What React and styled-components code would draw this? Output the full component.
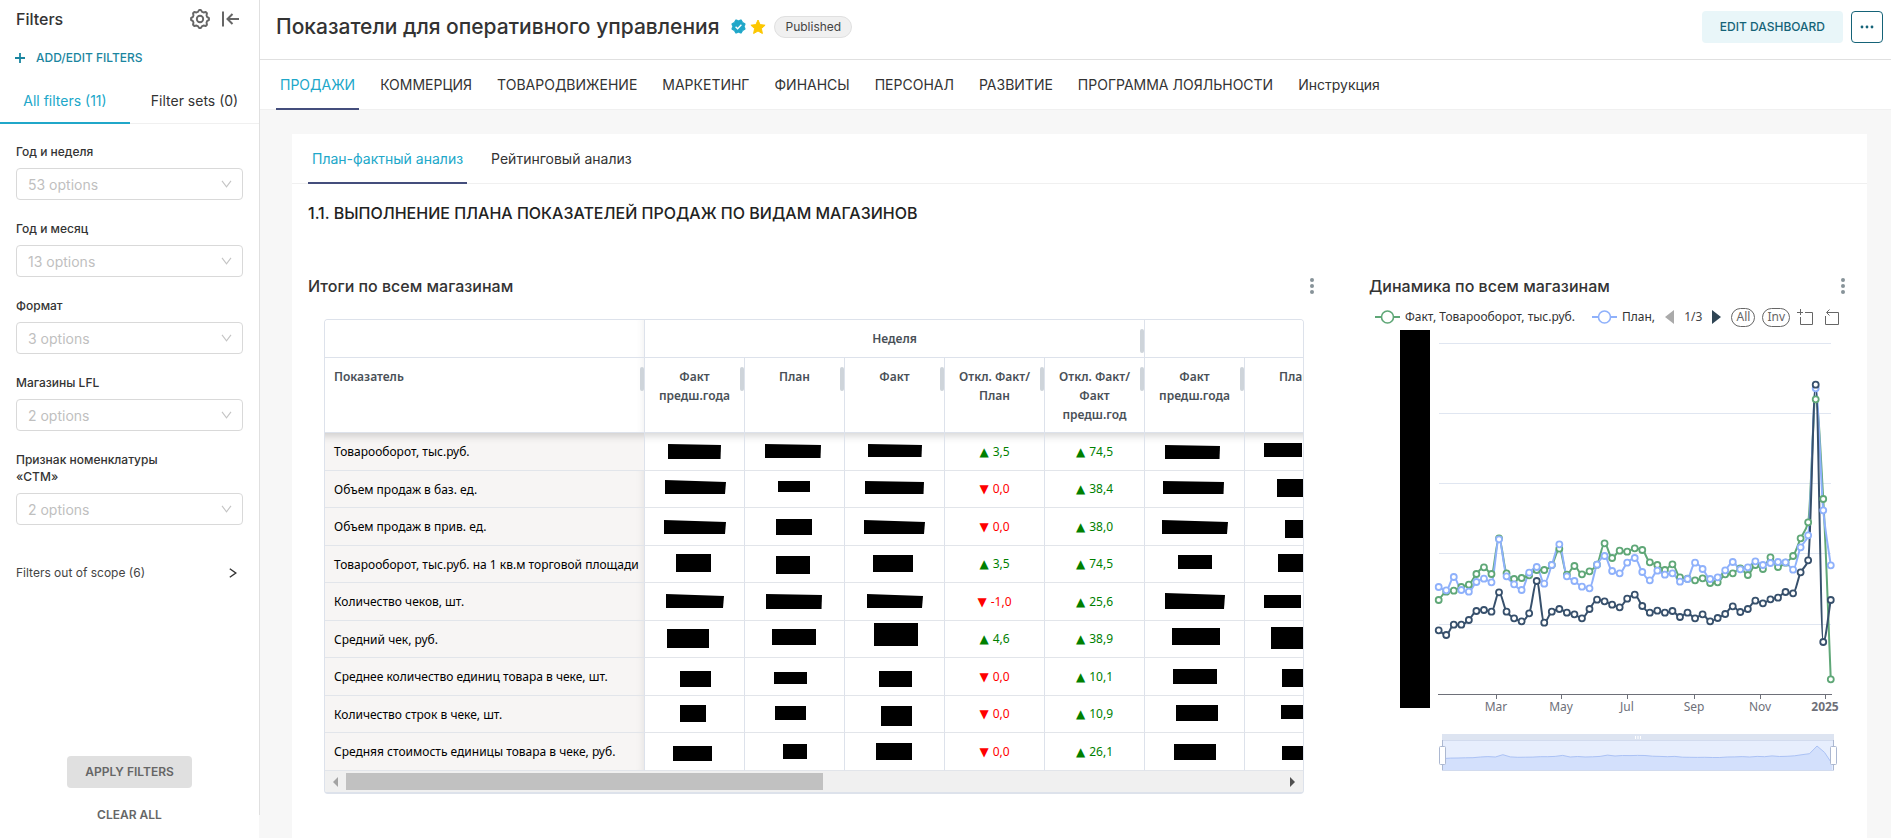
import React from "react";
import styled, { createGlobalStyle } from "styled-components";

const GlobalStyle = createGlobalStyle`
  * { box-sizing: border-box; }
  body {
    margin: 0;
    background: #f7f7f7;
    color: #333;
    font-family: Inter, "Liberation Sans", sans-serif;
    font-size: 14px;
    line-height: 20px;
  }
  button, select { font: inherit; color: inherit; }
  h1, h2, h3 { margin: 0; }
`;

const Page = styled.div`
  display: grid;
  grid-template-columns: 259px minmax(0, 1fr);
  min-height: 100vh;
`;

/* ---------- Sidebar ---------- */

const Sidebar = styled.aside`
  position: relative;
  display: flex;
  flex-direction: column;
  background: #fff;
  &::after {
    content: "";
    position: absolute;
    z-index: 1;
    top: 0;
    right: -1px;
    bottom: 23px;
    width: 1px;
    background: #e0e0e0;
  }
`;

const SidebarHeader = styled.div`
  display: flex;
  align-items: center;
  gap: 12px;
  padding: 8px 19px 0 16px;
`;

const SidebarTitle = styled.h2`
  flex: 1;
  font-size: 16px;
  line-height: 22px;
  font-weight: 500;
`;

const IconButton = styled.button`
  display: flex;
  padding: 0;
  border: 0;
  background: none;
  color: ${(p) => p.$color || "#666"};
  cursor: pointer;
`;

const AddFilters = styled.button`
  display: flex;
  align-items: center;
  align-self: flex-start;
  gap: 11px;
  margin: 18px 0 0 15px;
  padding: 0;
  border: 0;
  background: none;
  color: #1a85a0;
  font-size: 12px;
  font-weight: 500;
  cursor: pointer;
`;

const FilterTabs = styled.div`
  display: grid;
  grid-template-columns: 130px 129px;
  margin-top: 12px;
  border-bottom: 1px solid #f0f0f0;
`;

const FilterTab = styled.button`
  height: 44px;
  margin-bottom: -1px;
  padding: 0;
  border: 0;
  border-bottom: 2px solid ${(p) => (p.$active ? "#20a7c9" : "transparent")};
  background: none;
  color: ${(p) => (p.$active ? "#20a7c9" : "#333")};
  cursor: pointer;
`;

const FilterList = styled.div`
  display: flex;
  flex-direction: column;
  gap: 20px;
  padding: 19px 16px 0;
`;

const FilterField = styled.label`
  display: flex;
  flex-direction: column;
  gap: 8px;
  font-size: 12px;
  line-height: 17px;
  font-weight: 500;
  & > span { max-width: 170px; }
`;

const SelectBox = styled.div`
  display: grid;
  align-items: center;
  & > * { grid-area: 1 / 1; }
  & > svg { justify-self: end; margin-right: 11px; pointer-events: none; }
`;

const Select = styled.select`
  appearance: none;
  width: 100%;
  height: 32px;
  padding: 0 11px;
  border: 1px solid #d9d9d9;
  border-radius: 4px;
  background: #fff;
  color: #bfbfbf;
  font-size: 14px;
  font-weight: 400;
`;

const OutOfScope = styled.button`
  display: flex;
  align-items: center;
  justify-content: space-between;
  margin-top: 38px;
  padding: 0 22px 0 16px;
  border: 0;
  background: none;
  color: #444;
  font-size: 12px;
  cursor: pointer;
`;

const SidebarActions = styled.div`
  display: flex;
  flex-direction: column;
  align-items: center;
  gap: 11px;
  margin-top: auto;
  padding-bottom: 7px;
`;

const ActionButton = styled.button`
  height: 32px;
  padding: 0 18px;
  border: 0;
  border-radius: 4px;
  background: ${(p) => (p.$filled ? "#e0e0e0" : "none")};
  color: #666;
  font-size: 12px;
  font-weight: 600;
  cursor: pointer;
`;

/* ---------- Header ---------- */

const Main = styled.main`
  display: flex;
  flex-direction: column;
  min-width: 0;
`;

const Header = styled.header`
  display: flex;
  align-items: center;
  gap: 8px;
  height: 60px;
  padding: 0 8px 6px 17px;
  border-bottom: 1px solid #e0e0e0;
  background: #fff;
`;

const Title = styled.h1`
  font-size: 21px;
  line-height: 28px;
  font-weight: 500;
`;

const TitleIcons = styled.span`
  display: flex;
  align-items: center;
  gap: 4px;
  padding-left: 4px;
`;

const Published = styled.span`
  height: 22px;
  padding: 0 10px;
  border: 1px solid #e0e0e0;
  border-radius: 11px;
  background: #f0f0f0;
  font-size: 12px;
  line-height: 20px;
  color: #444;
`;

const EditButton = styled.button`
  height: 32px;
  margin-left: auto;
  padding: 0 18px;
  border: 0;
  border-radius: 4px;
  background: #e9f6f9;
  color: #156378;
  font-size: 12px;
  font-weight: 500;
  cursor: pointer;
`;

const MoreButton = styled.button`
  display: grid;
  place-items: center;
  width: 32px;
  height: 32px;
  padding: 0;
  border: 1px solid #156378;
  border-radius: 4px;
  background: #fff;
  color: #156378;
  cursor: pointer;
`;

const TabBar = styled.nav`
  display: flex;
  gap: ${(p) => p.$gap}px;
  height: 50px;
  padding-left: ${(p) => p.$indent}px;
  border-bottom: 1px solid #f0f0f0;
  background: #fff;
`;

const Tab = styled.button`
  height: 50px;
  padding: 0 4px;
  border: 0;
  border-top: 2px solid transparent;
  border-bottom: 2px solid ${(p) => (p.$active ? "#444e7c" : "transparent")};
  background: none;
  color: ${(p) => (p.$active ? "#20a7c9" : "#333")};
  white-space: nowrap;
  cursor: pointer;
`;

/* ---------- Dashboard body ---------- */

const Card = styled.section`
  flex: 1;
  margin: 24px 24px 0 33px;
  background: #fff;
`;

const SectionTitle = styled.h2`
  padding: 17px 16px 0;
  font-size: 16px;
  line-height: 24px;
  font-weight: 500;
  color: #222;
`;

const Charts = styled.div`
  display: grid;
  grid-template-columns: minmax(0, 1fr) 482px;
  gap: 49px;
  padding: 49px 16px 40px;
`;

const ChartHeader = styled.div`
  display: flex;
  align-items: center;
  justify-content: space-between;
  padding-right: 6px;
`;

const ChartTitle = styled.h3`
  font-size: 16px;
  line-height: 24px;
  font-weight: 500;
`;

const TableFrame = styled.div`
  margin: 21px 16px 0;
  border: 1px solid #dde2eb;
  border-bottom-width: 2px;
  border-radius: 4px;
  overflow: hidden;
`;

const Table = styled.table`
  width: 1020px;
  table-layout: fixed;
  border-collapse: separate;
  border-spacing: 0;
  font-family: "Noto Sans", "Open Sans", sans-serif;
  font-size: 12px;
  line-height: 19px;
  color: #000;
`;

const HeadCell = styled.th`
  position: relative;
  height: ${(p) => (p.$group ? 38 : 75)}px;
  padding: 9px 9px 0;
  border-right: 1px solid #dde2eb;
  border-bottom: 1px solid #dde2eb;
  background: #fff;
  color: #495057;
  font-weight: 600;
  text-align: ${(p) => (p.$frozen ? "left" : "center")};
  vertical-align: top;
  ${(p) => p.$frozen && "box-shadow: inset -8px 0 8px -8px rgba(0,0,0,.08);"}
`;

const ResizeHandle = styled.span`
  position: absolute;
  top: 9px;
  right: 0;
  width: 4px;
  height: 24px;
  border-radius: 2px;
  background: #ced4da;
`;

const Row = styled.tr`
  height: 37px;
  &:nth-child(odd) { height: 38px; }
  &:first-child > * { box-shadow: inset 0 12px 10px -10px rgba(0, 0, 0, 0.2); }
`;

const RowName = styled.th`
  padding: 0 0 0 9px;
  border-right: 1px solid #dde2eb;
  border-bottom: 1px solid #e2e5ea;
  background: #f7f5f4;
  font-weight: 400;
  text-align: left;
  white-space: nowrap;
  box-shadow: inset -8px 0 8px -8px rgba(0, 0, 0, 0.1);
`;

const Cell = styled.td`
  padding: 0;
  border-right: 1px solid #dde2eb;
  border-bottom: 1px solid #e2e5ea;
  color: ${(p) => p.$color || "#000"};
  text-align: center;
  & > svg { display: block; overflow: visible; }
`;

const DeltaMark = styled.span`
  margin-right: 4px;
  font-family: "DejaVu Sans", sans-serif;
`;

const ScrollTrack = styled.div`
  display: flex;
  align-items: center;
  justify-content: space-between;
  height: 21px;
  padding: 0 8px;
  background: #f0f0f0;
`;

const ScrollThumb = styled.div`
  width: calc(50% - 4px);
  height: 17px;
  margin: 0 auto 0 8px;
  background: #c1c1c1;
`;

const Legend = styled.div`
  display: flex;
  align-items: center;
  height: 20px;
  margin-top: 9px;
  padding-left: 6px;
  font-family: "Noto Sans", "Open Sans", sans-serif;
  font-size: 12px;
  color: #333;
  white-space: nowrap;
`;

const LegendItem = styled.span`
  display: flex;
  align-items: center;
  gap: 5px;
  margin-right: ${(p) => p.$gap}px;
`;

const Pager = styled.span`
  display: flex;
  align-items: center;
  gap: 10px;
  margin-left: auto;
  color: #444;
`;

const LegendTools = styled.span`
  display: flex;
  align-items: center;
  gap: 7px;
  margin: 0 12px 0 10px;
`;

const PillButton = styled.button`
  min-width: 24px;
  height: 19px;
  padding: 0 4px;
  border: 1px solid #666;
  border-radius: 10px;
  background: #fff;
  color: #666;
  font-size: 12px;
  line-height: 16px;
  cursor: pointer;
`;

const ChartSvg = styled.svg`
  display: block;
  width: 100%;
  height: auto;
  margin-top: 1px;
  font-family: "Noto Sans", "Open Sans", sans-serif;
  font-size: 12px;
`;

/* ---------- Data ---------- */

const FILTERS = [
  ["Год и неделя", "53 options"],
  ["Год и месяц", "13 options"],
  ["Формат", "3 options"],
  ["Магазины LFL", "2 options"],
  ["Признак номенклатуры «СТМ»", "2 options"],
];

const TABS = [
  "ПРОДАЖИ", "КОММЕРЦИЯ", "ТОВАРОДВИЖЕНИЕ", "МАРКЕТИНГ", "ФИНАНСЫ",
  "ПЕРСОНАЛ", "РАЗВИТИЕ", "ПРОГРАММА ЛОЯЛЬНОСТИ", "Инструкция",
];

const COLUMNS = [
  "Факт предш.года", "План", "Факт", "Откл. Факт/План",
  "Откл. Факт/Факт предш.год", "Факт предш.года", "План",
];

// Each mask covers a hidden figure: x, y, width, height, slope of the top edge.
const ROWS = [
  { name: "Товарооборот, тыс.руб.", plan: "3,5", year: "74,5",
    masks: [[23, 10, 53, 15, 1], [20, 10, 56, 14, 1], [23, 10, 54, 13, 1], [20, 11, 55, 14, 1], [19, 9, 38, 14, 0]] },
  { name: "Объем продаж в баз. ед.", plan: "0,0", year: "38,4",
    masks: [[20, 9, 61, 14, 2], [33, 10, 32, 11, 0], [20, 10, 59, 13, 1], [18, 10, 61, 13, 1], [32, 8, 27, 18, 0]] },
  { name: "Объем продаж в прив. ед.", plan: "0,0", year: "38,0",
    masks: [[19, 11, 62, 14, 2], [31, 10, 36, 16, 0], [19, 11, 61, 14, 2], [17, 11, 66, 14, 2], [40, 11, 20, 18, 0]] },
  { name: "Товарооборот, тыс.руб. на 1 кв.м торговой площади", plan: "3,5", year: "74,5",
    masks: [[31, 8, 35, 18, 0], [31, 10, 34, 18, 0], [28, 9, 40, 17, 0], [33, 9, 34, 14, 0], [33, 8, 27, 18, 0]] },
  { name: "Количество чеков, шт.", plan: "-1,0", year: "25,6",
    masks: [[21, 10, 58, 14, 2], [21, 10, 56, 15, 1], [22, 10, 56, 14, 2], [20, 9, 60, 16, 2], [19, 11, 37, 13, 0]] },
  { name: "Средний чек, руб.", plan: "4,6", year: "38,9",
    masks: [[22, 8, 42, 19, 0], [27, 8, 44, 16, 0], [29, 2, 44, 23, 0], [27, 7, 48, 17, 0], [26, 6, 33, 22, 0]] },
  { name: "Среднее количество единиц товара в чеке, шт.", plan: "0,0", year: "10,1",
    masks: [[35, 12, 31, 16, 0], [29, 13, 33, 12, 0], [34, 12, 33, 16, 0], [28, 10, 44, 15, 0], [37, 10, 23, 18, 0]] },
  { name: "Количество строк в чеке, шт.", plan: "0,0", year: "10,9",
    masks: [[35, 9, 26, 17, 0], [30, 10, 31, 14, 0], [36, 10, 31, 20, 0], [31, 9, 42, 16, 0], [36, 9, 23, 14, 0]] },
  { name: "Средняя стоимость единицы товара в чеке, руб.", plan: "0,0", year: "26,1",
    masks: [[28, 12, 39, 15, 0], [38, 10, 24, 15, 0], [31, 9, 36, 17, 0], [29, 10, 42, 16, 0], [37, 12, 22, 14, 0]] },
];

const GREEN = "#5fa777";
const BLUE = "#8fb1fb";
const NAVY = "#37506c";

// Weekly depth below the chart's top edge, in thirds of a unit.
const SERIES = [
  { color: GREEN, data: [720,695,692,681,674,642,622,642,535,640,657,654,646,630,630,615,566,644,618,643,634,614,550,594,572,575,565,570,607,615,630,613,652,656,661,655,669,667,643,640,625,645,615,627,592,621,608,588,535,487,118,417,958] },
  { color: BLUE, data: [681,691,651,690,695,666,656,667,538,649,673,690,638,621,671,615,553,649,663,680,685,614,588,633,640,608,594,636,661,632,644,640,665,657,608,627,657,652,631,606,628,622,604,615,609,606,607,629,562,526,85,451,616] },
  { color: NAVY, data: [811,825,794,794,780,753,750,755,697,755,775,784,760,663,788,755,747,758,763,775,747,719,724,734,742,716,704,738,758,752,758,753,771,758,775,763,784,774,762,739,756,747,722,730,718,713,696,700,637,601,74,846,720] },
];

const toPoints = (data) => data.map((d, i) => [69.7 + i * 7.54, 32 + d / 3]);

// Monotone cubic through the points, so that peaks do not overshoot.
function smoothPath(pts) {
  const step = pts[1][0] - pts[0][0];
  const slope = pts.slice(1).map((p, i) => (p[1] - pts[i][1]) / step);
  const tangent = pts.map((_, i) => {
    if (i === 0) return slope[0];
    if (i === pts.length - 1) return slope[i - 1];
    const a = slope[i - 1];
    const b = slope[i];
    return a * b <= 0 ? 0 : (2 * a * b) / (a + b);
  });
  return pts.reduce((path, [x, y], i) => {
    if (i === 0) return `M${x},${y}`;
    const [px, py] = pts[i - 1];
    const h = step / 3;
    return `${path}C${px + h},${py + h * tangent[i - 1]} ${x - h},${y - h * tangent[i]} ${x},${y}`;
  }, "");
}

/* ---------- Icons ---------- */

const GearIcon = () => {
  const teeth = 8;
  const pts = [];
  for (let i = 0; i < teeth * 4; i += 1) {
    const angle = ((i + 0.5) / (teeth * 4)) * Math.PI * 2 - Math.PI / 16;
    const r = i % 4 < 2 ? 9 : 7.4;
    pts.push(`${(10 + r * Math.cos(angle)).toFixed(2)},${(10 + r * Math.sin(angle)).toFixed(2)}`);
  }
  return (
    <svg width="20" height="20" viewBox="0 0 20 20" fill="none" stroke="currentColor" strokeWidth="1.9" strokeLinejoin="round">
      <polygon points={pts.join(" ")} />
      <circle cx="10" cy="10" r="3.2" />
    </svg>
  );
};

const CollapseIcon = () => (
  <svg width="18" height="20" viewBox="0 0 18 20" fill="none" stroke="currentColor" strokeWidth="2">
    <path d="M1 2.5v15M17 10H6M10.5 5L5.500 10l5 5" />
  </svg>
);

const PlusIcon = () => (
  <svg width="10" height="10" viewBox="0 0 10 10" stroke="currentColor" strokeWidth="1.8">
    <path d="M5 0v10M0 5h10" />
  </svg>
);

const ChevronDown = () => (
  <svg width="11" height="8" viewBox="0 0 11 8" fill="none" stroke="#c4c4c4" strokeWidth="1.1">
    <path d="M1 .8l4.500 6L10 .8" />
  </svg>
);

const ChevronRight = () => (
  <svg width="8" height="10" viewBox="0 0 8 10" fill="none" stroke="#333" strokeWidth="1.400">
    <path d="M.8.7L6.800 5l-6 4.300" />
  </svg>
);

const CertifiedIcon = () => {
  const pts = [];
  for (let i = 0; i < 16; i += 1) {
    const angle = (i / 16) * Math.PI * 2;
    const r = i % 2 ? 7.2 : 5.8;
    pts.push(`${(7.5 + r * Math.cos(angle)).toFixed(2)},${(7.5 + r * Math.sin(angle)).toFixed(2)}`);
  }
  return (
    <svg width="15" height="15" viewBox="0 0 15 15">
      <polygon points={pts.join(" ")} fill="#20a7c9" stroke="#20a7c9" strokeLinejoin="round" />
      <path d="M4.600 7.800l2 2 3.800-4" fill="none" stroke="#fff" strokeWidth="1.400" />
    </svg>
  );
};

const StarIcon = () => (
  <svg width="16" height="16" viewBox="0 0 16 16" fill="#fcc700" stroke="#fcc700" strokeLinejoin="round">
    <path d="M8 1l2.100 4.600 5 .6-3.700 3.400 1 4.900L8 12l-4.400 2.500 1-4.900L.9 6.200l5-.6z" />
  </svg>
);

const Dots = ({ vertical }) => (
  <svg width={vertical ? 4 : 14} height={vertical ? 16 : 4} fill="currentColor">
    {[0, 1, 2].map((i) =>
      vertical
        ? <circle key={i} cx="2" cy={2 + i * 6} r="2" />
        : <circle key={i} cx={2 + i * 5} cy="2" r="1.400" />
    )}
  </svg>
);

const Arrow = ({ left, color, width = 9, height = 14 }) => (
  <svg width={width} height={height} fill={color}>
    <path d={left ? `M${width} 0v${height}L0 ${height / 2}z` : `M0 0v${height}l${width} ${-height / 2}z`} />
  </svg>
);

const LegendMark = ({ color }) => (
  <svg width="25" height="14" fill="#fff" stroke={color} strokeWidth="2">
    <path d="M0 7h25" />
    <circle cx="12.500" cy="7" r="6" strokeWidth="1.600" />
  </svg>
);

const ZoomIcon = () => (
  <svg width="21" height="16" fill="none" stroke="#666">
    <path d="M0 3.500h6M3.500 0v6M8 3.500h7.500v12h-12V8" />
  </svg>
);

const RestoreIcon = () => (
  <svg width="14" height="16" fill="none" stroke="#666">
    <path d="M2 3.500h11.500v12H.5V7M4.500.5l-3 3 3 3" />
  </svg>
);

/* ---------- Parts ---------- */

const Mask = ({ shape: [x, y, w, h, slope] }) => (
  <svg width="99" height="36" aria-hidden="true">
    <polygon points={`${x},${y} ${x + w},${y + slope} ${x + w - slope / 2},${y + h} ${x},${y + h}`} />
  </svg>
);

const Delta = ({ value }) => {
  const up = parseFloat(value.replace(",", ".")) > 0;
  return (
    <Cell $color={up ? "#008000" : "#f00"}>
      <DeltaMark>{up ? "▲" : "▼"}</DeltaMark>
      {value}
    </Cell>
  );
};

function TotalsTable() {
  return (
    <TableFrame>
      <Table>
        <colgroup>
          <col width="320" />
          {COLUMNS.map((_, i) => <col key={i} width="100" />)}
        </colgroup>
        <thead>
          <tr>
            <HeadCell $group $frozen />
            <HeadCell $group colSpan={5}>Неделя<ResizeHandle /></HeadCell>
            <HeadCell $group colSpan={2} />
          </tr>
          <tr>
            <HeadCell $frozen>Показатель<ResizeHandle /></HeadCell>
            {COLUMNS.map((name, i) => (
              <HeadCell key={i}>
                {name.split("/").map((part, n) => (n ? <React.Fragment key={n}>/<wbr />{part}</React.Fragment> : part))}
                <ResizeHandle />
              </HeadCell>
            ))}
          </tr>
        </thead>
        <tbody>
          {ROWS.map(({ name, plan, year, masks }) => (
            <Row key={name}>
              <RowName scope="row">{name}</RowName>
              {masks.slice(0, 3).map((m, i) => <Cell key={i}><Mask shape={m} /></Cell>)}
              <Delta value={plan} />
              <Delta value={year} />
              {masks.slice(3).map((m, i) => <Cell key={i}><Mask shape={m} /></Cell>)}
            </Row>
          ))}
        </tbody>
      </Table>
      <ScrollTrack>
        <Arrow left color="#a3a3a3" width={5} height={10} />
        <ScrollThumb />
        <Arrow color="#505050" width={5} height={10} />
      </ScrollTrack>
    </TableFrame>
  );
}

function TrendChart() {
  const overview = SERIES[0].data.map((d, i) => `${74 + i * 7.48},${(415.5 + d * 0.021).toFixed(1)}`);
  return (
    <ChartSvg viewBox="0 0 482 446" role="img" aria-label="Динамика по всем магазинам">
      {[15, 85, 155, 225, 296].map((y) => (
        <rect key={y} x="70" y={y} width="392" height="1" fill="#e0e6f1" />
      ))}
      <rect x="69" y="366" width="394" height="1" fill="#6e7079" />
      {[["Mar", 127], ["May", 192], ["Jul", 258], ["Sep", 325], ["Nov", 391], ["2025", 456]].map(([label, x]) => (
        <g key={label} fill="#6e7079">
          <rect x={x} y="366" width="1" height="5" />
          <text x={x} y="383" textAnchor="middle" fontWeight={label === "2025" ? 700 : 400}>{label}</text>
        </g>
      ))}
      {SERIES.map(({ color, data }) => (
        <path key={color} d={smoothPath(toPoints(data))} fill="none" stroke={color} strokeWidth="2" />
      ))}
      {SERIES.map(({ color, data }) => (
        <g key={color} fill="#fff" stroke={color} strokeWidth="1.800">
          {toPoints(data).map(([x, y], i) => <circle key={i} cx={x} cy={y} r="3" />)}
        </g>
      ))}
      <rect x="31" y="2" width="30" height="378" />
      <rect x="73" y="406" width="392" height="7" fill="#dde4f1" />
      <rect x="73" y="413" width="392" height="29" fill="#e7eefd" />
      <polygon points={`74,442 ${overview.join(" ")} 463,442`} fill="#d3e0fc" />
      <polyline points={overview.join(" ")} fill="none" stroke="#abc2f5" />
      <path d="M73 412.500h392M73 442.500h392" stroke="#d2dbee" />
      <path d="M73.500 412v30M464.500 412v30" stroke="#acb8d1" />
      <path d="M266.500 408v3M269 408v3M271.500 408v3" stroke="#fff" />
      {[70.5, 461.5].map((x) => (
        <rect key={x} x={x} y="418.500" width="6" height="18" rx="1" fill="#fff" stroke="#acb8d1" />
      ))}
    </ChartSvg>
  );
}

export default function App() {
  return (
    <>
      <GlobalStyle />
      <Page>
        <Sidebar>
          <SidebarHeader>
            <SidebarTitle>Filters</SidebarTitle>
            <IconButton aria-label="Filter settings"><GearIcon /></IconButton>
            <IconButton aria-label="Collapse filters"><CollapseIcon /></IconButton>
          </SidebarHeader>
          <AddFilters><PlusIcon />ADD/EDIT FILTERS</AddFilters>
          <FilterTabs>
            <FilterTab $active>All filters (11)</FilterTab>
            <FilterTab>Filter sets (0)</FilterTab>
          </FilterTabs>
          <FilterList>
            {FILTERS.map(([label, placeholder]) => (
              <FilterField key={label}>
                <span>{label}</span>
                <SelectBox>
                  <Select><option>{placeholder}</option></Select>
                  <ChevronDown />
                </SelectBox>
              </FilterField>
            ))}
          </FilterList>
          <OutOfScope>Filters out of scope (6)<ChevronRight /></OutOfScope>
          <SidebarActions>
            <ActionButton $filled>APPLY FILTERS</ActionButton>
            <ActionButton>CLEAR ALL</ActionButton>
          </SidebarActions>
        </Sidebar>

        <Main>
          <Header>
            <Title>Показатели для оперативного управления</Title>
            <TitleIcons><CertifiedIcon /><StarIcon /></TitleIcons>
            <Published>Published</Published>
            <EditButton>EDIT DASHBOARD</EditButton>
            <MoreButton aria-label="More actions"><Dots /></MoreButton>
          </Header>
          <TabBar $indent={17} $gap={17}>
            {TABS.map((t, i) => <Tab key={t} $active={i === 0}>{t}</Tab>)}
          </TabBar>
          <Card>
            <TabBar $indent={16} $gap={20}>
              <Tab $active>План-фактный анализ</Tab>
              <Tab>Рейтинговый анализ</Tab>
            </TabBar>
            <SectionTitle>1.1. ВЫПОЛНЕНИЕ ПЛАНА ПОКАЗАТЕЛЕЙ ПРОДАЖ ПО ВИДАМ МАГАЗИНОВ</SectionTitle>
            <Charts>
              <div>
                <ChartHeader>
                  <ChartTitle>Итоги по всем магазинам</ChartTitle>
                  <IconButton $color="#879399" aria-label="Table options"><Dots vertical /></IconButton>
                </ChartHeader>
                <TotalsTable />
              </div>
              <div>
                <ChartHeader>
                  <ChartTitle>Динамика по всем магазинам</ChartTitle>
                  <IconButton $color="#879399" aria-label="Chart options"><Dots vertical /></IconButton>
                </ChartHeader>
                <Legend>
                  <LegendItem $gap={17}><LegendMark color={GREEN} />Факт, Товарооборот, тыс.руб.</LegendItem>
                  <LegendItem $gap={0}><LegendMark color={BLUE} />План,</LegendItem>
                  <Pager>
                    <IconButton aria-label="Previous"><Arrow left color="#aaa" /></IconButton>
                    1/3
                    <IconButton aria-label="Next"><Arrow color="#2f4554" /></IconButton>
                  </Pager>
                  <LegendTools>
                    <PillButton>All</PillButton>
                    <PillButton>Inv</PillButton>
                    <IconButton aria-label="Zoom"><ZoomIcon /></IconButton>
                    <IconButton aria-label="Restore"><RestoreIcon /></IconButton>
                  </LegendTools>
                </Legend>
                <TrendChart />
              </div>
            </Charts>
          </Card>
        </Main>
      </Page>
    </>
  );
}
